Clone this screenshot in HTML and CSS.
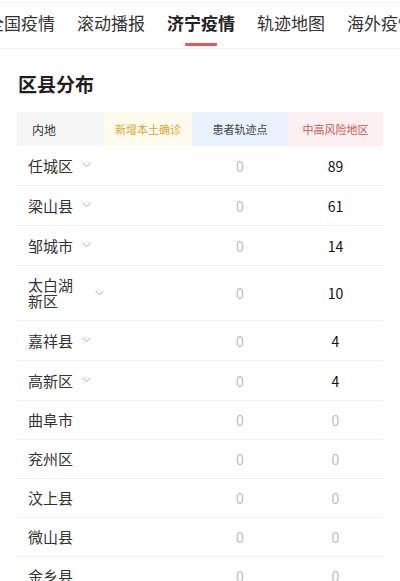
FILE: index.html
```html
<!DOCTYPE html>
<html lang="zh-CN">
<head>
    <meta charset="utf-8">
    <meta name="viewport" content="width=device-width, initial-scale=1.0">
    <title>济宁疫情 - 区县分布</title>
    <link rel="stylesheet" href="styles.css">
</head>

<body>
    <!-- Top tabs -->
    <div class="tab-bar">
        <div class="tabs">
            <div class="tab">全国疫情</div>
            <div class="tab">滚动播报</div>
            <div class="tab active">济宁疫情</div>
            <div class="tab">轨迹地图</div>
            <div class="tab">海外疫情</div>
        </div>
    </div>

    <div class="section">
        <h2 class="section-title">区县分布</h2>

        <!-- Table header -->
        <div class="table-head">
            <div class="th th-area">内地</div>
            <div class="th th-new">新增本土确诊</div>
            <div class="th th-track">患者轨迹点</div>
            <div class="th th-risk">中高风险地区</div>
        </div>

        <!-- Table rows -->
        <div class="table-body" id="tableBody">
            <div class="row">
                <div class="cell-name"><span class="name">任城区</span><svg class="chevron" viewBox="0 0 9 6"><polyline points="0.5,0.8 4.5,4.8 8.5,0.8" /></svg></div>
                <div></div>
                <div class="cell-num zero">0</div>
                <div class="cell-num">89</div>
            </div>
            <div class="row">
                <div class="cell-name"><span class="name">梁山县</span><svg class="chevron" viewBox="0 0 9 6"><polyline points="0.5,0.8 4.5,4.8 8.5,0.8" /></svg></div>
                <div></div>
                <div class="cell-num zero">0</div>
                <div class="cell-num">61</div>
            </div>
            <div class="row">
                <div class="cell-name"><span class="name">邹城市</span><svg class="chevron" viewBox="0 0 9 6"><polyline points="0.5,0.8 4.5,4.8 8.5,0.8" /></svg></div>
                <div></div>
                <div class="cell-num zero">0</div>
                <div class="cell-num">14</div>
            </div>
            <div class="row">
                <div class="cell-name"><span class="name">太白湖新区</span><svg class="chevron" viewBox="0 0 9 6"><polyline points="0.5,0.8 4.5,4.8 8.5,0.8" /></svg></div>
                <div></div>
                <div class="cell-num zero">0</div>
                <div class="cell-num">10</div>
            </div>
            <div class="row">
                <div class="cell-name"><span class="name">嘉祥县</span><svg class="chevron" viewBox="0 0 9 6"><polyline points="0.5,0.8 4.5,4.8 8.5,0.8" /></svg></div>
                <div></div>
                <div class="cell-num zero">0</div>
                <div class="cell-num">4</div>
            </div>
            <div class="row">
                <div class="cell-name"><span class="name">高新区</span><svg class="chevron" viewBox="0 0 9 6"><polyline points="0.5,0.8 4.5,4.8 8.5,0.8" /></svg></div>
                <div></div>
                <div class="cell-num zero">0</div>
                <div class="cell-num">4</div>
            </div>
            <div class="row">
                <div class="cell-name"><span class="name">曲阜市</span></div>
                <div></div>
                <div class="cell-num zero">0</div>
                <div class="cell-num zero">0</div>
            </div>
            <div class="row">
                <div class="cell-name"><span class="name">兖州区</span></div>
                <div></div>
                <div class="cell-num zero">0</div>
                <div class="cell-num zero">0</div>
            </div>
            <div class="row">
                <div class="cell-name"><span class="name">汶上县</span></div>
                <div></div>
                <div class="cell-num zero">0</div>
                <div class="cell-num zero">0</div>
            </div>
            <div class="row">
                <div class="cell-name"><span class="name">微山县</span></div>
                <div></div>
                <div class="cell-num zero">0</div>
                <div class="cell-num zero">0</div>
            </div>
            <div class="row">
                <div class="cell-name"><span class="name">金乡县</span></div>
                <div></div>
                <div class="cell-num zero">0</div>
                <div class="cell-num zero">0</div>
            </div>
        </div>
    </div>
</body>
</html>
```

FILE: styles.css
```css
body {
    font-family: "Noto Sans CJK SC", "Noto Sans", sans-serif;
    background-color: #ffffff;
    color: #333333;
    margin: 0;
    padding: 0;
    overflow: hidden;
}

/* Top tab bar */
.tab-bar {
    margin-top: 2px;
    border-top: 1px solid #f2f2f2;
    border-bottom: 1px solid #f2f2f2;
    overflow: hidden;
}

.tabs {
    display: flex;
    gap: 22px;
    margin-left: -13px;
    padding-top: 8px;
    padding-bottom: 2px;
}

.tab {
    flex-shrink: 0;
    display: flex;
    flex-direction: column;
    align-items: center;
    font-size: 17px;
    line-height: 24px;
    color: #333333;
    white-space: nowrap;
}

.tab::after {
    content: "";
    display: block;
    width: 32px;
    height: 3px;
    margin-top: 8px;
    border-radius: 1px;
    background-color: transparent;
}

.tab.active {
    font-weight: 700;
    color: #222222;
}

.tab.active::after {
    background-color: #e05a5c;
}

/* District section */
.section {
    padding: 21px 17px 0;
}

.section-title {
    margin: 0 0 15px 1px;
    font-size: 19px;
    line-height: 27px;
    font-weight: 700;
    color: #1f1f1f;
}

.table-head,
.row {
    display: grid;
    grid-template-columns: 87px 88px 96px 95px;
}

.th {
    height: 34px;
    display: flex;
    align-items: center;
    justify-content: center;
    font-size: 11px;
}

.th-area {
    justify-content: flex-start;
    padding-left: 15px;
    font-size: 12px;
    color: #333333;
    background-color: #f6f6f7;
}

.th-new {
    color: #d3a93a;
    background-color: #fffaeb;
}

.th-track {
    color: #444444;
    background-color: #e8f2fd;
}

.th-risk {
    color: #c9554f;
    background-color: #fdf0f2;
}

/* Rows */
.row {
    border-bottom: 1px solid #f1f1f1;
}

.cell-name {
    display: flex;
    align-items: center;
    padding: 11px 0 11px 11px;
}

.name {
    flex: 0 1 auto;
    font-size: 15px;
    line-height: 16px;
    color: #333333;
}

.chevron {
    flex-shrink: 0;
    width: 9px;
    height: 17px;
    margin-left: 9px;
    padding: 5px 0 6px;
    box-sizing: border-box;
    fill: none;
    stroke: #a8a8a8;
    stroke-width: 1;
}

.cell-num {
    display: flex;
    align-items: center;
    justify-content: center;
    font-size: 14px;
    font-weight: 400;
    color: #111111;
}

.cell-num.zero {
    color: #bdbdbd;
}
```
